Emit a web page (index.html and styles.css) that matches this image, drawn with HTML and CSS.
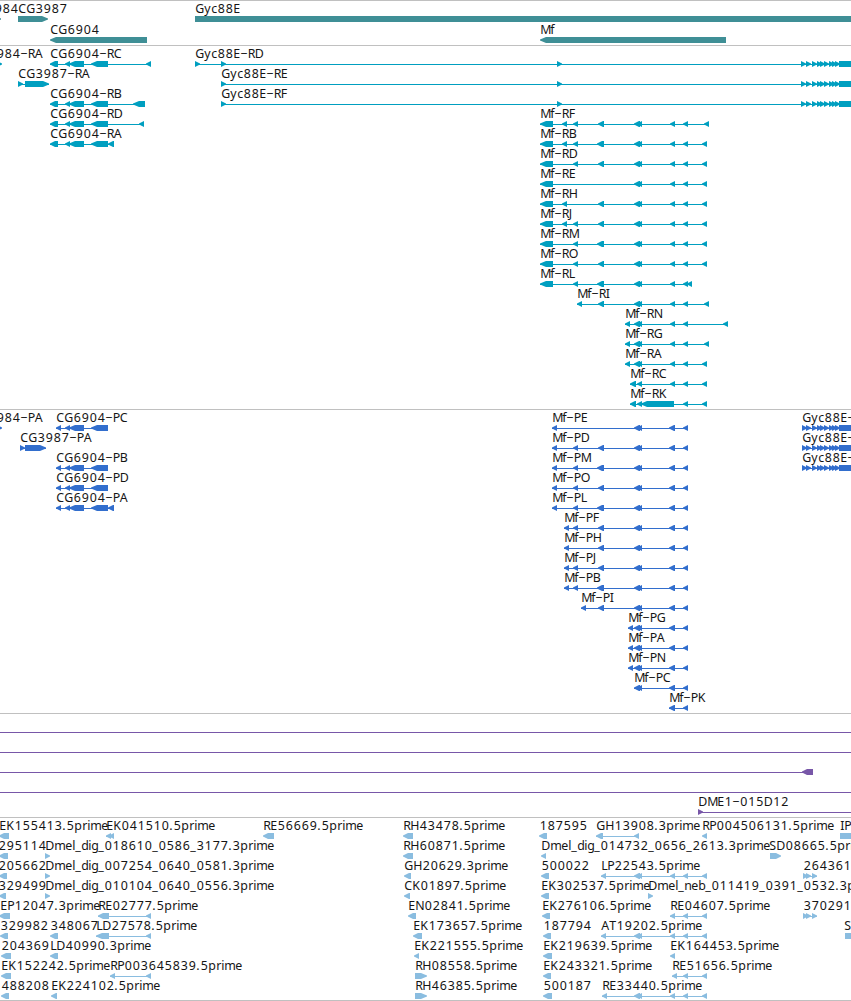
FILE: index.html
```
<!DOCTYPE html>
<html lang="en">
<head>
    <meta charset="UTF-8">
    <title>Genome Browser</title>
    <link rel="stylesheet" href="styles.css">
</head>
<body>
    <div class="browser">
        <div class="track genes" id="genes"></div>
        <div class="track transcripts" id="transcripts"></div>
        <div class="track proteins" id="proteins"></div>
        <div class="track clones" id="clones"></div>
        <div class="track ests" id="ests"></div>
    </div>
    <script src="tracks.js"></script>
</body>
</html>
```
FILE: styles.css
```
body {
    margin: 0;
    background-color: #fff;
    overflow: hidden;
}
.browser {
    width: 851px;
    border-bottom: 1px solid #c0c0c0;
}
.track {
    border-top: 1px solid #c0c0c0;
    padding-bottom: 3px;
}
.row {
    display: block;
    width: 851px;
    height: 20px;
    overflow: visible;
}
.row text {
    font-family: "Noto Sans", sans-serif;
    font-size: 12.4px;
    fill: #151515;
}

/* Track colours */
.genes {
    color: #3f8f96;
    padding-bottom: 2px;
}
.genes .row {
    height: 21px;
}
.transcripts {
    color: #009fc0;
}
.proteins {
    color: #326ecd;
}
.clones {
    color: #7857a8;
}
.ests {
    color: #8abde0;
    padding-bottom: 2px;
}
.row rect,
.row polygon {
    fill: currentColor;
}
```
FILE: tracks.js
```
// Label advance widths in px, digits are all 8
const ADVANCE = {
    A: 8, C: 8, D: 9, E: 7, F: 6, G: 9, H: 9, I: 4, J: 4, K: 8, L: 6, M: 10, N: 9, O: 9,
    P: 7, R: 7, S: 7, T: 7, B: 7, b: 7, c: 6, d: 7, e: 7, f: 4, g: 7, i: 3, l: 3, m: 11,
    n: 7, p: 8, r: 5, y: 7, "_": 6, ".": 4, "-": 7.5
};

// Exons shared by several features
const T = [[634, 640], [637, 642]];
const END = [[670, 675], [683, 688], [702, 707]];
const END2 = [[670, 675], [683, 688], [704, 709]];
const PEND = [[669, 675], [683, 688]];
const UTR = [540, 553], A = [562, 567], B = [573, 578], C = [598, 604], CL = [597, 604];
const CG = [[65, 70], [69, 84], [91, 108]];
const GYC = [[806, 811], [812, 817], [817, 822], [820, 825], [824, 829], [829, 834], [832, 837], [835, 840], [839, 870]];
const SMALL = [[803, 808], [806, 811], [812, 817]];

// Feature: [label, label x, strand, exons]
const TRACKS = {
    genes: [
        [["984", -6, "+", [[-4, 1]]], ["CG3987", 18, "+", [[18, 48]]], ["Gyc88E", 195, "+", [[195, 870]]]],
        [["CG6904", 50, "-", [[50, 147]]], ["Mf", 540, "-", [[540, 726]]]]
    ],
    transcripts: [
        [["984-RA", -4, "+", [[-4, 2]]], ["CG6904-RC", 50, "-", [[50, 58], ...CG, [146, 151]]],
            ["Gyc88E-RD", 195, "+", [[195, 200], [221, 226], [557, 562], [801, 806], ...GYC]]],
        [["CG3987-RA", 18, "+", [[18, 23], [25, 49]]], ["Gyc88E-RE", 221, "+", [[221, 226], [557, 562], [801, 806], ...GYC]]],
        [["CG6904-RB", 50, "-", [[50, 58], ...CG, [133, 145]]], ["Gyc88E-RF", 221, "+", [[221, 226], [557, 562], [801, 806], ...GYC]]],
        [["CG6904-RD", 50, "-", [[50, 58], ...CG, [139, 144]]], ["Mf-RF", 540, "-", [UTR, A, B, C, ...T, ...END2]]],
        [["CG6904-RA", 50, "-", [[50, 58], ...CG, [108, 114]]], ["Mf-RB", 540, "-", [UTR, A, B, CL, ...T, ...END]]],
        [["Mf-RD", 540, "-", [UTR, B, C, ...T, ...END]]],
        [["Mf-RE", 540, "-", [UTR, ...T, ...END]]],
        [["Mf-RH", 540, "-", [UTR, A, C, ...T, ...END]]],
        [["Mf-RJ", 540, "-", [UTR, A, B, C, ...T, ...END]]],
        [["Mf-RM", 540, "-", [UTR, B, CL, ...T, ...END]]],
        [["Mf-RO", 540, "-", [UTR, B, C, ...T, ...END]]],
        [["Mf-RL", 540, "-", [UTR, B, CL, ...T, [670, 675], [683, 688], [687, 692]]]],
        [["Mf-RI", 577, "-", [[577, 582], C, ...T, ...END2]]],
        [["Mf-RN", 625, "-", [[625, 630], ...T, [670, 675], [683, 688], [723, 728]]]],
        [["Mf-RG", 625, "-", [[625, 630], ...T, ...END2]]],
        [["Mf-RA", 625, "-", [[625, 630], ...T, ...END]]],
        [["Mf-RC", 630, "-", [[630, 636], [637, 642], ...END]]],
        [["Mf-RK", 630, "-", [[630, 636], [637, 642], [641, 674], [683, 688], [702, 707]]]]
    ],
    proteins: [
        [["984-PA", -4, "+", [[-4, 2]]], ["CG6904-PC", 56, "-", [[56, 61], ...CG]],
            ["Mf-PE", 552, "-", [[552, 557], ...T, ...PEND]], ["Gyc88E-PD", 802, "+", [[802, 807], ...GYC]]],
        [["CG3987-PA", 20, "+", [[20, 25], [25, 46]]], ["Mf-PD", 552, "-", [[552, 557], B, C, ...T, ...PEND]],
            ["Gyc88E-PE", 802, "+", [[802, 807], ...GYC]]],
        [["CG6904-PB", 56, "-", [[56, 61], ...CG]], ["Mf-PM", 552, "-", [[552, 557], B, CL, ...T, ...PEND]],
            ["Gyc88E-PF", 802, "+", [[802, 807], ...GYC]]],
        [["CG6904-PD", 56, "-", [[56, 61], ...CG]], ["Mf-PO", 552, "-", [[552, 557], B, C, ...T, ...PEND]]],
        [["CG6904-PA", 56, "-", [[56, 61], ...CG, [108, 114]]], ["Mf-PL", 552, "-", [[552, 557], B, CL, ...T, ...PEND]]],
        [["Mf-PF", 564, "-", [[564, 569], B, C, ...T, ...PEND]]],
        [["Mf-PH", 564, "-", [[564, 569], C, ...T, ...PEND]]],
        [["Mf-PJ", 564, "-", [[564, 569], B, C, ...T, ...PEND]]],
        [["Mf-PB", 564, "-", [[564, 569], B, CL, ...T, ...PEND]]],
        [["Mf-PI", 581, "-", [[581, 586], C, ...T, ...PEND]]],
        [["Mf-PG", 628, "-", [[628, 633], ...T, ...PEND]]],
        [["Mf-PA", 628, "-", [[628, 633], ...T, ...PEND]]],
        [["Mf-PN", 628, "-", [[628, 633], ...T, ...PEND]]],
        [["Mf-PC", 634, "-", [...T, ...PEND]]],
        [["Mf-PK", 669, "-", PEND]]
    ],
    clones: [
        [["", 0, "-", [[-20, -10], [860, 870]]]],
        [["", 0, "-", [[-20, -10], [860, 870]]]],
        [["", 0, "-", [[-20, -10], [802, 813]]]],
        [["", 0, "-", [[-20, -10], [860, 870]]]],
        [["DME1-015D12", 698, "+", [[698, 703], [860, 870]]]]
    ],
    ests: [
        [["EK155413.5prime", -1, "-", [[-1, 9]]], ["EK041510.5prime", 106, "-", [[106, 111], [109, 114]]],
            ["RE56669.5prime", 263, "-", [[263, 274]]], ["RH43478.5prime", 403, "-", [[403, 413]]],
            ["187595", 539, "-", [[539, 547]]], ["GH13908.3prime", 596, "-", [[596, 603], [634, 639]]],
            ["RP004506131.5prime", 702, "-", [[702, 707]]], ["IP", 840, "+", [[840, 870]]]],
        [["295114", -2, "-", [[-1, 8]]], ["Dmel_dig_018610_0586_3177.3prime", 45, "+", [[45, 50]]],
            ["RH60871.5prime", 403, "-", [[403, 413]]], ["Dmel_dig_014732_0656_2613.3prime", 541, "-", [[541, 546]]],
            ["SD08665.5prime", 769, "+", [[770, 781]]]],
        [["205662", -2, "-", [[-1, 7]]], ["Dmel_dig_007254_0640_0581.3prime", 45, "+", [[45, 50]]],
            ["GH20629.3prime", 404, "-", [[404, 411]]], ["500022", 541, "-", [[541, 549]]],
            ["LP22543.5prime", 601, "-", [[601, 606], ...T, ...END]], ["264361", 803, "+", SMALL]],
        [["329499", -2, "-", [[-1, 6]]], ["Dmel_dig_010104_0640_0556.3prime", 45, "+", [[45, 50]]],
            ["CK01897.5prime", 404, "-", [[404, 410]]], ["EK302537.5prime", 541, "-", [[541, 549]]],
            ["Dmel_neb_011419_0391_0532.3prime", 648, "+", [[648, 653]]]],
        [["EP12047.3prime", 0, "-", [[-1, 10]]], ["RE02777.5prime", 98, "-", [[98, 109], [146, 151]]],
            ["EN02841.5prime", 408, "-", [[408, 416]]], ["EK276106.5prime", 542, "-", [[542, 550]]],
            ["RE04607.5prime", 670, "-", END], ["370291", 803, "+", SMALL]],
        [["329982", 0, "-", [[0, 8]]], ["348067", 50, "-", [[50, 58]]], ["LD27578.5prime", 96, "-", [[96, 109], [146, 151]]],
            ["EK173657.5prime", 413, "-", [[413, 422]]], ["187794", 543, "-", [[543, 551]]],
            ["AT19202.5prime", 601, "-", [[601, 606], ...T, ...END]], ["S", 844, "+", [[845, 870]]]],
        [["204369", 1, "-", [[1, 11]]], ["LD40990.3prime", 50, "-", [[50, 58]]], ["EK221555.5prime", 414, "-", [[414, 419]]],
            ["EK219639.5prime", 543, "-", [[543, 552]]], ["EK164453.5prime", 670, "-", [[670, 675]]]],
        [["EK152242.5prime", 1, "-", [[1, 11]]], ["RP003645839.5prime", 110, "-", [[110, 115], [146, 151]]],
            ["RH08558.5prime", 415, "+", [[415, 427]]], ["EK243321.5prime", 543, "-", [[543, 551]]],
            ["RE51656.5prime", 672, "-", [[672, 677], [683, 688], [702, 707]]]],
        [["488208", 1, "-", [[1, 9]]], ["EK224102.5prime", 51, "-", [[51, 57]]], ["RH46385.5prime", 415, "+", [[415, 427]]],
            ["500187", 543, "-", [[543, 552]]], ["RE33440.5prime", 602, "-", [[602, 607], ...T, ...END]]]
    ]
};

// One exon, pointing along its strand
function exon(x1, x2, strand) {
    const head = x2 - x1 > 11 ? 6 : 5;
    if (strand === "+") {
        return `<polygon points="${x1},15 ${x2 - head},15 ${x2},17.5 ${x2},18.5 ${x2 - head},21 ${x1},21"/>`;
    }
    return `<polygon points="${x2},15 ${x1 + head},15 ${x1},17.5 ${x1},18.5 ${x1 + head},21 ${x2},21"/>`;
}

function label(name, x) {
    const xs = [];
    for (const ch of name) {
        xs.push(/\d/.test(ch) ? x + 0.7 : x + 0.2);
        x += ADVANCE[ch] || 8;
    }
    // the dash between gene and product is drawn wide
    return `<text y="12" x="${xs.join(" ")}">${name.replace("-", "−")}</text>`;
}

function feature([name, x, strand, exons]) {
    const start = exons[0][0];
    const end = exons[exons.length - 1][1];
    let out = exons.map(e => exon(e[0], e[1], strand)).join("");
    if (exons.length > 1) {
        out += `<rect x="${start}" y="18" width="${end - start}" height="1"/>`;
    }
    return name ? out + label(name, x) : out;
}

for (const id in TRACKS) {
    document.getElementById(id).innerHTML = TRACKS[id]
        .map(row => `<svg class="row">${row.map(feature).join("")}</svg>`)
        .join("");
}
```
